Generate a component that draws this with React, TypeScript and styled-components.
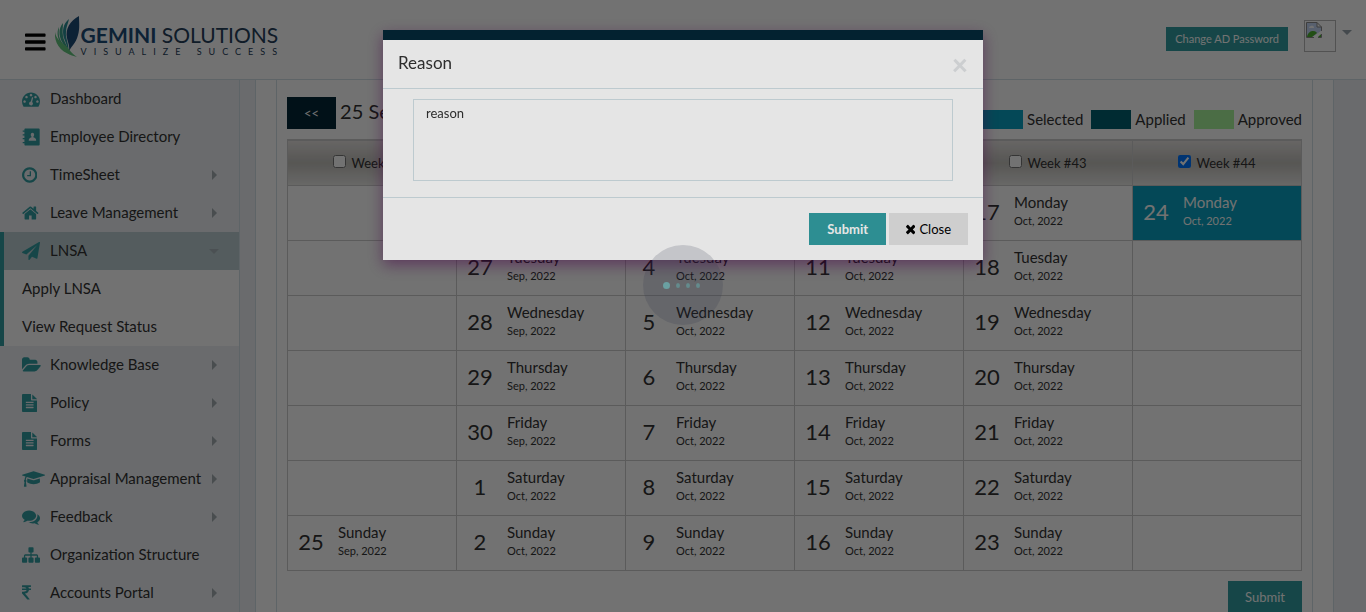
import React from "react";
import styled, { createGlobalStyle, css } from "styled-components";

const color = {
  teal: "#339fa3",
  navy: "#042636",
  line: "#d3e1e7",
  grid: "#ccc",
  text: "#333",
  selected: "#0aa3c2",
  applied: "#006070",
  approved: "#a9f59b",
};

const GlobalStyle = createGlobalStyle`
  *, *::before, *::after { box-sizing: border-box; }
  body {
    margin: 0;
    background: #fff;
    color: ${color.text};
    font: 15px/20px Lato, "Noto Sans", sans-serif;
    overflow: hidden;
  }
  button, textarea { font-family: inherit; }
`;

/* ---------- icons ---------- */

type Glyph = { x: number; w: number; d: string };

const glyphs: Record<string, Glyph> = {
  bars: { x: 128, w: 1536, d: "M1664 1344v128q0 26-19 45t-45 19h-1408q-26 0-45-19t-19-45v-128q0-26 19-45t45-19h1408q26 0 45 19t19 45zm0-512v128q0 26-19 45t-45 19h-1408q-26 0-45-19t-19-45v-128q0-26 19-45t45-19h1408q26 0 45 19t19 45zm0-512v128q0 26-19 45t-45 19h-1408q-26 0-45-19t-19-45v-128q0-26 19-45t45-19h1408q26 0 45 19t19 45z" },
  dashboard: { x: 0, w: 1792, d: "M384 1152q0-53-37.5-90.5t-90.5-37.5-90.5 37.5-37.5 90.5 37.5 90.5 90.5 37.5 90.5-37.5 37.5-90.5zm192-448q0-53-37.5-90.5t-90.5-37.5-90.5 37.5-37.5 90.5 37.5 90.5 90.5 37.5 90.5-37.5 37.5-90.5zm428 481l101-382q6-26-7.5-48.5t-38.5-29.5-48 6.5-30 39.5l-101 382q-60 5-107 43.5t-63 98.5q-20 77 20 146t117 89 146-20 89-117q16-60-6-117t-72-91zm660-33q0-53-37.5-90.5t-90.5-37.5-90.5 37.5-37.5 90.5 37.5 90.5 90.5 37.5 90.5-37.5 37.5-90.5zm-640-640q0-53-37.5-90.5t-90.5-37.5-90.5 37.5-37.5 90.5 37.5 90.5 90.5 37.5 90.5-37.5 37.5-90.5zm448 192q0-53-37.5-90.5t-90.5-37.5-90.5 37.5-37.5 90.5 37.5 90.5 90.5 37.5 90.5-37.5 37.5-90.5zm320 448q0 261-141 483-19 29-54 29h-1402q-35 0-54-29-141-221-141-483 0-182 71-348t191-286 286-191 348-71 348 71 286 191 191 286 71 348z" },
  directory: { x: 0, w: 1792, d: "M320 40h1340q100 0 100 100v1512q0 100-100 100h-1340q-80 0-80-80v-160h-170v-130h170v-250h-170v-130h170v-250h-170v-130h170v-250h-170v-130h170v-122q0-80 80-80zM1040 480q-170 0-170 190 0 120 80 190v70q-280 60-280 330h740q0-270-280-330v-70q80-70 80-190 0-190-170-190z" },
  clock: { x: 128, w: 1536, d: "M1024 544v448q0 14-9 23t-23 9h-320q-14 0-23-9t-9-23v-64q0-14 9-23t23-9h224v-352q0-14 9-23t23-9h64q14 0 23 9t9 23zm416 352q0-148-73-273t-198-198-273-73-273 73-198 198-73 273 73 273 198 198 273 73 273-73 198-198 73-273zm224 0q0 209-103 385.5t-279.5 279.5-385.5 103-385.5-103-279.5-279.5-103-385.5 103-385.5 279.5-279.5 385.5-103 385.5 103 279.5 279.5 103 385.5z" },
  home: { x: 64, w: 1664, d: "M1472 992v480q0 26-19 45t-45 19h-384v-384h-256v384h-384q-26 0-45-19t-19-45v-480q0-1 .5-3t.5-3l575-474 575 474q1 2 1 6zm223-69l-62 74q-8 9-21 11h-3q-13 0-21-7l-692-577-692 577q-12 8-24 7-13-2-21-11l-62-74q-8-10-7-23.5t11-21.5l719-599q32-26 76-26t76 26l244 204v-195q0-14 9-23t23-9h192q14 0 23 9t9 23v408l219 182q10 8 11 21.5t-7 23.5z" },
  plane: { x: 0, w: 1792, d: "M1764 11q33 24 27 64l-256 1536q-5 29-32 45-14 8-31 8-11 0-24-5l-453-185-242 295q-18 23-49 23-13 0-22-4-19-7-30.5-23.5t-11.5-36.5v-349l864-1059-1069 925-395-162q-37-14-40-55-2-40 32-59l1664-960q15-9 32-9 20 0 36 11z" },
  folder: { x: 0, w: 1920, d: "M1879 952q0 31-31 66l-336 396q-43 51-120.5 86.5t-143.5 35.5h-1088q-34 0-60.5-13t-26.5-43q0-31 31-66l336-396q43-51 120.5-86.5t143.5-35.5h1088q34 0 60.5 13t26.5 43zm-343-344v160h-832q-94 0-197 47.5t-164 119.5l-337 396-5 6q0-4-.5-12.5t-.5-12.5v-960q0-92 66-158t158-66h320q92 0 158 66t66 158v32h544q92 0 158 66t66 158z" },
  file: { x: 128, w: 1536, d: "M1596 476q14 14 28 36h-472v-472q22 14 36 28zm-476 164h544v1056q0 40-28 68t-68 28h-1344q-40 0-68-28t-28-68v-1600q0-40 28-68t68-28h800v544q0 40 28 68t68 28zm160 736v-64q0-14-9-23t-23-9h-704q-14 0-23 9t-9 23v64q0 14 9 23t23 9h704q14 0 23-9t9-23zm0-256v-64q0-14-9-23t-23-9h-704q-14 0-23 9t-9 23v64q0 14 9 23t23 9h704q14 0 23-9t9-23zm0-256v-64q0-14-9-23t-23-9h-704q-14 0-23 9t-9 23v64q0 14 9 23t23 9h704q14 0 23-9t9-23z" },
  cap: { x: 0, w: 2304, d: "M1774 836l18 316q4 69-82 128t-235 93.5-323 34.5-323-34.5-235-93.5-82-128l18-316 574 181q22 7 48 7t48-7zm530-324q0 23-22 31l-1120 352q-4 1-10 1t-10-1l-652-206q-43 34-71 111.5t-34 178.5q63 36 63 109 0 69-58 107l58 433q2 14-8 25-9 11-24 11h-192q-15 0-24-11-10-11-8-25l58-433q-58-38-58-107 0-73 65-111 11-207 98-330l-333-104q-22-8-22-31t22-31l1120-352q4-1 10-1t10 1l1120 352q22 8 22 31z" },
  comments: { x: 0, w: 1792, d: "M1408 768q0 139-94 257t-256.5 186.5-353.5 68.5q-86 0-176-16-124 88-278 128-36 9-86 16h-3q-11 0-20.5-8t-11.5-21q-1-3-1-6.5t.5-6.5 2-6l2.5-5 3.5-5.5 4-5 4.5-5 4-4.5q5-6 23-25t26-29.5 22.5-29 25-38.5 20.5-44q-124-72-195-177t-71-224q0-139 94-257t256.5-186.5 353.5-68.5 353.5 68.5 256.5 186.5 94 257zm384 256q0 120-71 224.5t-195 176.5q10 24 20.5 44t25 38.5 22.5 29 26 29.5 23 25q1 1 4 4.5t4.5 5 4 5 3.5 5.5l2.5 5 2 6 .5 6.5-1 6.5q-3 14-13 22t-22 7q-50-7-86-16-154-40-278-128-90 16-176 16-271 0-472-132 58 4 88 4 161 0 309-45t264-129q125-92 192-212t67-254q0-77-23-152 129 71 204 178t75 230z" },
  sitemap: { x: 0, w: 1792, d: "M1792 1248v320q0 40-28 68t-68 28h-320q-40 0-68-28t-28-68v-320q0-40 28-68t68-28h96v-192h-512v192h96q40 0 68 28t28 68v320q0 40-28 68t-68 28h-320q-40 0-68-28t-28-68v-320q0-40 28-68t68-28h96v-192h-512v192h96q40 0 68 28t28 68v320q0 40-28 68t-68 28h-320q-40 0-68-28t-28-68v-320q0-40 28-68t68-28h96v-192q0-52 38-90t90-38h512v-192h-96q-40 0-68-28t-28-68v-320q0-40 28-68t68-28h320q40 0 68 28t28 68v320q0 40-28 68t-68 28h-96v192h512q52 0 90 38t38 90v192h96q40 0 68 28t28 68z" },
  rupee: { x: 448, w: 898, d: "M1345 470v102q0 14-9 23t-23 9h-168q-23 144-129 234t-276 110q167 178 459 536 14 16 4 34-8 18-29 18h-195q-16 0-25-12-306-367-498-571-9-9-9-22v-127q0-13 9.5-22.5t22.5-9.5h112q132 0 212.5-43t102.5-125h-427q-14 0-23-9t-9-23v-102q0-14 9-23t23-9h413q-57-113-268-113h-145q-13 0-22.5-9.5t-9.5-22.5v-133q0-14 9-23t23-9h832q14 0 23 9t9 23v102q0 14-9 23t-23 9h-233q47 61 64 144h171q14 0 23 9t9 23z" },
  times: { x: 302, w: 1188, d: "M1490 1322q0 40-28 68l-136 136q-28 28-68 28t-68-28l-294-294-294 294q-28 28-68 28t-68-28l-136-136q-28-28-28-68t28-68l294-294-294-294q-28-28-28-68t28-68l136-136q28-28 68-28t68 28l294 294 294-294q28-28 68-28t68 28l136 136q28 28 28 68t-28 68l-294 294 294 294q28 28 28 68z" },
};

const Svg = styled.svg<{ $size: number }>`
  display: block;
  height: ${(p) => p.$size}px;
  width: auto;
  fill: currentColor;
`;

function Icon({ name, size = 18 }: { name: string; size?: number }) {
  const g = glyphs[name];
  return (
    <Svg $size={size} viewBox={`${g.x} 0 ${g.w} 1792`} aria-hidden="true">
      <path d={g.d} fillRule={name === "directory" ? "evenodd" : "nonzero"} />
    </Svg>
  );
}

const Caret = styled.i<{ $down?: boolean; $tone?: string }>`
  display: block;
  justify-self: center;
  width: 0;
  height: 0;
  border: 5px solid transparent;
  ${(p) =>
    p.$down
      ? css`
          border-top-color: ${p.$tone ?? "#a9b5ba"};
          border-bottom-width: 0;
        `
      : css`
          border-left-color: ${p.$tone ?? "#a4acb1"};
          border-right-width: 0;
        `}
`;

/* ---------- header ---------- */

const Page = styled.div`
  display: flex;
  flex-direction: column;
  height: 100vh;
  overflow: hidden;
`;

const Header = styled.header`
  display: flex;
  align-items: center;
  flex: none;
  height: 80px;
  padding: 0 14px 0 25px;
  border-bottom: 1px solid ${color.line};
`;

const MenuButton = styled.button`
  padding: 4px 0 0;
  border: 0;
  background: none;
  color: #000;
`;

const Logo = styled.a`
  display: flex;
  align-items: center;
  gap: 1px;
  margin-left: 9px;
  padding-bottom: 6px;
  color: #24405a;
  text-decoration: none;
`;

const LogoWords = styled.span`
  display: flex;
  flex-direction: column;
  padding-top: 8px;
`;

const LogoName = styled.span`
  font-size: 21px;
  line-height: 22px;
  white-space: nowrap;
  b {
    color: #1d4c78;
    font-weight: 700;
  }
`;

const Tagline = styled.span`
  font-size: 9px;
  line-height: 12px;
  letter-spacing: 7px;
  white-space: nowrap;
`;

const Account = styled.div`
  display: flex;
  align-items: flex-start;
  margin-left: auto;
  padding-bottom: 7px;
`;

const Button = styled.button<{ $kind?: "teal" | "navy" | "grey"; $small?: boolean }>`
  display: inline-flex;
  align-items: center;
  justify-content: center;
  gap: 4px;
  height: ${(p) => (p.$small ? 24 : 32)}px;
  padding: 0 ${(p) => (p.$small ? 9 : 17)}px;
  border: 0;
  font-size: ${(p) => (p.$small ? 11 : 13)}px;
  line-height: 20px;
  white-space: nowrap;
  color: ${(p) => (p.$kind === "grey" ? "#000" : "#fff")};
  background: ${(p) =>
    p.$kind === "navy" ? color.navy : p.$kind === "grey" ? "#e6e6e6" : color.teal};
`;

const PasswordButton = styled(Button)`
  margin: 7px 16px 0 0;
`;

const Avatar = styled.span`
  display: block;
  width: 32px;
  height: 32px;
  margin-right: 6px;
  padding: 1px;
  border: 1px solid #b9b9b9;
`;

const AccountCaret = styled.span`
  padding-top: 10px;
`;

/* ---------- sidebar ---------- */

const Shell = styled.div`
  display: flex;
  flex: 1;
  min-height: 0;
`;

const Sidebar = styled.nav`
  flex: none;
  width: 240px;
  border-right: 1px solid ${color.line};
  background: #ecf0f4;
`;

const List = styled.ul`
  margin: 0;
  padding: 0;
  list-style: none;
`;

const Group = styled.li<{ $open?: boolean }>`
  border-left: 4px solid ${(p) => (p.$open ? color.teal : "transparent")};
`;

const Item = styled.a<{ $open?: boolean }>`
  display: grid;
  grid-template-columns: 28px 1fr 10px;
  align-items: center;
  height: 38px;
  padding: 0 20px 0 18px;
  color: ${color.text};
  text-decoration: none;
  white-space: nowrap;
  background: ${(p) => (p.$open ? "#bdced2" : "transparent")};
`;

const ItemIcon = styled.span`
  color: ${color.teal};
`;

const ItemLabel = styled.span`
  padding-bottom: 2px;
`;

const SubItem = styled.a`
  display: flex;
  align-items: center;
  height: 38px;
  padding: 0 0 2px 18px;
  background: #fff;
  color: ${color.text};
  text-decoration: none;
`;

/* ---------- content ---------- */

const Main = styled.main`
  display: flex;
  flex: 1;
  min-width: 0;
  padding: 0 32px 0 15px;
  background: #ecf0f4;
`;

const Sheet = styled.div`
  flex: 1;
  min-width: 0;
  padding: 0 20px;
  border: solid ${color.line};
  border-width: 0 1px;
  background: #fff;
`;

const Panel = styled.section`
  height: 100%;
  padding: 17px 10px 0;
  border: solid ${color.line};
  border-width: 0 1px;
`;

const Bar = styled.div`
  display: flex;
  align-items: flex-start;
  height: 42px;
`;

const Period = styled.h2`
  margin: 0 0 0 4px;
  font-size: 20px;
  font-weight: 400;
  line-height: 28px;
`;

const Legend = styled.div`
  display: flex;
  gap: 8px;
  margin: 13px 0 0 auto;
`;

const Key = styled.span<{ $tone: string }>`
  display: flex;
  align-items: center;
  gap: 4px;
  line-height: 19px;
  &::before {
    content: "";
    width: 40px;
    height: 19px;
    background: ${(p) => p.$tone};
  }
`;

const Calendar = styled.table`
  width: 100%;
  table-layout: fixed;
  border-collapse: collapse;
  border: 1px solid ${color.grid};
  border-top-width: 2px;
`;

const WeekHead = styled.th`
  height: 45px;
  padding: 0;
  border: 1px solid ${color.grid};
  border-top-width: 2px;
  font-size: 13px;
  font-weight: 400;
  background: linear-gradient(#e6e3e1, #c3c1bc 50%, #e9e9e6);
`;

const WeekLabel = styled.label`
  display: inline-flex;
  align-items: center;
  gap: 5px;
  input {
    width: 13px;
    height: 13px;
    margin: 0 0 3px;
  }
`;

const Cell = styled.td<{ $selected?: boolean }>`
  height: 55px;
  padding: 0;
  border: 1px solid ${color.grid};
  ${(p) =>
    p.$selected &&
    css`
      background: ${color.selected};
      color: #fff;
    `}
`;

const Day = styled.div`
  display: grid;
  grid-template-columns: 46px 1fr;
  column-gap: 4px;
  align-items: center;
  padding-bottom: 2px;
`;

const DayNumber = styled.span`
  font-size: 22px;
  line-height: 28px;
  text-align: center;
`;

const Weekday = styled.span`
  display: block;
  line-height: 18px;
`;

const Month = styled.span`
  display: block;
  font-size: 11px;
  line-height: 20px;
`;

const Actions = styled.div`
  display: flex;
  justify-content: flex-end;
  padding-top: 10px;
`;

/* ---------- dialog and loader ---------- */

const Backdrop = styled.div`
  position: fixed;
  inset: 0;
  padding: 30px 0;
  background: rgba(0, 0, 0, 0.5);
`;

const Dialog = styled.section`
  width: 600px;
  max-width: 100%;
  margin: 0 auto;
  border-top: 10px solid ${color.navy};
  background: #fff;
  box-shadow: 0 5px 14px rgba(80, 0, 80, 0.5);
`;

const DialogHead = styled.div`
  display: flex;
  align-items: center;
  justify-content: space-between;
  height: 49px;
  padding: 0 15px 3px;
  border-bottom: 1px solid ${color.line};
`;

const DialogTitle = styled.h1`
  margin: 0;
  font-size: 17px;
  font-weight: 400;
  line-height: 24px;
`;

const CloseX = styled.button`
  padding: 2px 0 0;
  border: 0;
  background: none;
  color: #e4e6e8;
  font-size: 28px;
  font-weight: 900;
  line-height: 24px;
`;

const DialogBody = styled.div`
  padding: 10px 30px 16px;
  border-bottom: 1px solid ${color.line};
`;

const ReasonBox = styled.textarea`
  display: block;
  width: 100%;
  height: 82px;
  padding: 3px 12px;
  border: 1px solid ${color.line};
  resize: none;
  background: #fff;
  color: ${color.text};
  font-size: 13px;
  line-height: 20px;
`;

const DialogFoot = styled.div`
  display: flex;
  justify-content: flex-end;
  gap: 3px;
  padding: 15px;
`;

const StrongButton = styled(Button)`
  padding: 0 18px;
  font-weight: 700;
`;

const Veil = styled.div`
  position: fixed;
  inset: 0;
  background: rgba(0, 0, 0, 0.1);
`;

const Loader = styled.div`
  position: fixed;
  top: 245px;
  left: 50%;
  display: flex;
  align-items: center;
  justify-content: center;
  gap: 6px;
  width: 80px;
  height: 80px;
  margin-left: -40px;
  padding-right: 3px;
  border-radius: 50%;
  background: rgba(43, 48, 72, 0.18);
`;

const Dot = styled.span<{ $big?: boolean }>`
  width: ${(p) => (p.$big ? 7 : 4)}px;
  height: ${(p) => (p.$big ? 7 : 5)}px;
  border-radius: 50%;
  background: ${(p) => (p.$big ? "#6aa0a1" : "#648b8d")};
`;

/* ---------- data ---------- */

type Entry = { icon: string; label: string; arrow?: boolean; children?: string[] };

const menu: Entry[] = [
  { icon: "dashboard", label: "Dashboard" },
  { icon: "directory", label: "Employee Directory" },
  { icon: "clock", label: "TimeSheet", arrow: true },
  { icon: "home", label: "Leave Management", arrow: true },
  { icon: "plane", label: "LNSA", arrow: true, children: ["Apply LNSA", "View Request Status"] },
  { icon: "folder", label: "Knowledge Base", arrow: true },
  { icon: "file", label: "Policy", arrow: true },
  { icon: "file", label: "Forms", arrow: true },
  { icon: "cap", label: "Appraisal Management", arrow: true },
  { icon: "comments", label: "Feedback", arrow: true },
  { icon: "sitemap", label: "Organization Structure" },
  { icon: "rupee", label: "Accounts Portal", arrow: true },
];

const weekdays = ["Monday", "Tuesday", "Wednesday", "Thursday", "Friday", "Saturday", "Sunday"];
const weeks = [39, 40, 41, 42, 43, 44];

/* Days run from 25 September to 24 October; the first column holds only its Sunday. */
function dayAt(week: number, weekday: number) {
  const n = 19 + week * 7 + weekday;
  if (n < 25 || n > 54) return null;
  return n > 30 ? { day: n - 30, month: "Oct, 2022" } : { day: n, month: "Sep, 2022" };
}

function Leaf() {
  return (
    <svg width="25" height="42" viewBox="0 0 25 42" aria-hidden="true">
      <path d="M24 0C15 5 10 13 12 22c1 5 3 8 2 14 1-5 7-8 9-17 2-6 1-13 1-19z" fill="#1d4c78" />
      <path d="M14 3C8 8 7 15 9 22c2 6 4 9 4 14 2-7-3-13-2-20 0-5 2-8 3-13z" fill="#2b8f96" />
      <path d="M8 7C3 13 4 20 7 26c3 5 6 8 7 12 0-7-5-11-6-18-1-5 0-8 0-13z" fill="#3fa38c" />
      <path d="M4 11c-3 6-1 13 3 18 3 4 6 6 8 10-1-7-7-9-10-16-2-4-1-8-1-12z" fill="#4fb384" />
      <path d="M0 16c-1 11 5 21 22 25-5-3-7-7-11-11C5 26 1 22 0 16z" fill="#62c57f" />
    </svg>
  );
}

function BrokenImage() {
  return (
    <svg width="16" height="16" viewBox="0 0 16 16" role="img" aria-label="User photo">
      <path d="M0 0h11l5 5v11H0z" fill="#fff" />
      <path d="M1 1h10v4h4v4L6 15H1z" fill="#c4d6f6" />
      <path d="M3 6q0-2 2-2 1-1 2 0 1 0 1 2z" fill="#fff" />
      <path d="M1 15c1-5 4-6 6-6 3 0 4 2 4 2l-5 4zM11 15l4-3v3z" fill="#4caf30" />
      <path d="M8 16 16 8v3l-5 5z" fill="#fff" />
      <path d="M.5 15.500V.5H11l4.500 4.500v4M.5 15.500H8M11 .5V5h4.500M12 15.500h3.500V12" fill="none" stroke="#8c8c8c" />
    </svg>
  );
}

export default function App() {
  return (
    <>
      <GlobalStyle />
      <Page>
        <Header>
          <MenuButton aria-label="Toggle menu">
            <Icon name="bars" size={24} />
          </MenuButton>
          <Logo href="#">
            <Leaf />
            <LogoWords>
              <LogoName>
                <b>GEMINI</b> SOLUTIONS
              </LogoName>
              <Tagline>VISUALIZE SUCCESS</Tagline>
            </LogoWords>
          </Logo>
          <Account>
            <PasswordButton $small>Change AD Password</PasswordButton>
            <Avatar>
              <BrokenImage />
            </Avatar>
            <AccountCaret>
              <Caret $down $tone="#98a4ac" />
            </AccountCaret>
          </Account>
        </Header>

        <Shell>
          <Sidebar>
            <List>
              {menu.map((m) => (
                <Group key={m.label} $open={!!m.children}>
                  <Item href="#" $open={!!m.children}>
                    <ItemIcon>
                      <Icon name={m.icon} />
                    </ItemIcon>
                    <ItemLabel>{m.label}</ItemLabel>
                    {m.arrow && <Caret $down={!!m.children} />}
                  </Item>
                  {m.children && (
                    <List>
                      {m.children.map((c) => (
                        <li key={c}>
                          <SubItem href="#">{c}</SubItem>
                        </li>
                      ))}
                    </List>
                  )}
                </Group>
              ))}
            </List>
          </Sidebar>

          <Main>
            <Sheet>
              <Panel>
                <Bar>
                  <Button $kind="navy">&lt;&lt;</Button>
                  <Period>25 Sep</Period>
                  <Legend>
                    <Key $tone={color.selected}>Selected</Key>
                    <Key $tone={color.applied}>Applied</Key>
                    <Key $tone={color.approved}>Approved</Key>
                  </Legend>
                </Bar>
                <Calendar>
                  <thead>
                    <tr>
                      {weeks.map((w) => (
                        <WeekHead key={w} scope="col">
                          <WeekLabel>
                            <input type="checkbox" defaultChecked={w === 44} />
                            Week #{w}
                          </WeekLabel>
                        </WeekHead>
                      ))}
                    </tr>
                  </thead>
                  <tbody>
                    {weekdays.map((name, r) => (
                      <tr key={name}>
                        {weeks.map((w, c) => {
                          const d = dayAt(c, r);
                          return (
                            <Cell key={w} $selected={w === 44 && !!d}>
                              {d && (
                                <Day>
                                  <DayNumber>{d.day}</DayNumber>
                                  <div>
                                    <Weekday>{name}</Weekday>
                                    <Month>{d.month}</Month>
                                  </div>
                                </Day>
                              )}
                            </Cell>
                          );
                        })}
                      </tr>
                    ))}
                  </tbody>
                </Calendar>
                <Actions>
                  <Button>Submit</Button>
                </Actions>
              </Panel>
            </Sheet>
          </Main>
        </Shell>
      </Page>

      <Backdrop>
        <Dialog role="dialog" aria-labelledby="reason-title">
          <DialogHead>
            <DialogTitle id="reason-title">Reason</DialogTitle>
            <CloseX aria-label="Dismiss">×</CloseX>
          </DialogHead>
          <DialogBody>
            <ReasonBox aria-labelledby="reason-title" defaultValue="reason" />
          </DialogBody>
          <DialogFoot>
            <StrongButton>Submit</StrongButton>
            <Button $kind="grey">
              <Icon name="times" size={14} />
              Close
            </Button>
          </DialogFoot>
        </Dialog>
      </Backdrop>

      <Veil />
      <Loader role="status" aria-label="Loading">
        <Dot $big />
        <Dot />
        <Dot />
        <Dot />
      </Loader>
    </>
  );
}
